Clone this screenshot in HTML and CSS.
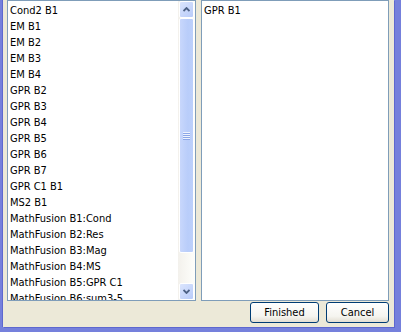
FILE: index.html
```html
<!DOCTYPE html>
<html lang="en">
<head>
  <meta charset="UTF-8" />
  <title>Select items</title>
  <link rel="stylesheet" href="styles.css">
</head>
<body>
  <div class="window">
    <div class="client">
      <div class="panes">
        <div class="listbox source">
          <ul class="items">
            <li>Cond2 B1</li>
            <li>EM B1</li>
            <li>EM B2</li>
            <li>EM B3</li>
            <li>EM B4</li>
            <li>GPR B2</li>
            <li>GPR B3</li>
            <li>GPR B4</li>
            <li>GPR B5</li>
            <li>GPR B6</li>
            <li>GPR B7</li>
            <li>GPR C1 B1</li>
            <li>MS2 B1</li>
            <li>MathFusion B1:Cond</li>
            <li>MathFusion B2:Res</li>
            <li>MathFusion B3:Mag</li>
            <li>MathFusion B4:MS</li>
            <li>MathFusion B5:GPR C1</li>
            <li>MathFusion B6:sum3-5</li>
          </ul>
          <div class="scrollbar">
            <div class="sb-btn">
              <svg width="7" height="5" viewBox="0 0 7 5"><polyline points="0.5,4 3.5,1 6.5,4" fill="none" stroke="#4d6185" stroke-width="1.8"/></svg>
            </div>
            <div class="sb-track">
              <div class="sb-thumb"><span class="grip"></span></div>
            </div>
            <div class="sb-btn">
              <svg width="7" height="5" viewBox="0 0 7 5"><polyline points="0.5,1 3.5,4 6.5,1" fill="none" stroke="#4d6185" stroke-width="1.8"/></svg>
            </div>
          </div>
        </div>
        <div class="listbox target">
          <ul class="items">
            <li>GPR B1</li>
          </ul>
        </div>
      </div>
      <div class="actions">
        <button class="btn finished">Finished</button>
        <button class="btn cancel">Cancel</button>
      </div>
    </div>
  </div>
</body>
</html>
```

FILE: styles.css
```css
body { margin: 0; background: #ece9d8; font-family: "DejaVu Sans Condensed", "Liberation Sans", sans-serif; font-size: 11px; color: #000; }
.window { width: 401px; height: 332px; box-sizing: border-box; border-left: 3px solid #7580dc; border-right: 7px solid #7580dc; border-bottom: 5px solid #7580dc; }
.client { height: 100%; box-sizing: border-box; padding: 0 5px 4px 4px; display: flex; flex-direction: column; box-shadow: 1px 1px 0 #5e68cf, -1px 0 0 #5e68cf; }
.panes { display: flex; gap: 5px; height: 301px; }
.listbox { box-sizing: border-box; height: 100%; border: 1px solid #7f9db9; background: #fff; display: flex; overflow: hidden; }
.source { width: 189px; }
.target { width: 188px; }
.items { list-style: none; margin: 0; padding: 2px 0 0 2px; flex: 1; overflow: hidden; }
.items li { height: 16px; line-height: 16px; white-space: nowrap; }

.scrollbar { width: 17px; display: flex; flex-direction: column; background: linear-gradient(to right, #f3f1ec, #fefefb); }
.sb-btn { height: 17px; box-sizing: border-box; margin: 0 1px; border: 1px solid #fff; border-radius: 2px; background: linear-gradient(135deg, #dbe5fd, #b8cbf9); display: flex; align-items: center; justify-content: center; }
.sb-track { flex: 1; }
.sb-thumb { height: 235px; box-sizing: border-box; margin: 0 1px; border: 1px solid #fff; border-radius: 2px; background: linear-gradient(to right, #c8d7fc, #b9cdfa 60%, #bcd0fb); display: flex; align-items: center; justify-content: center; }
.grip { width: 7px; height: 8px; background: repeating-linear-gradient(#eef3fe 0 1px, #8ca7e8 1px 2px); }

.actions { display: flex; justify-content: flex-end; gap: 7px; margin-top: 1px; }
.btn { height: 21px; box-sizing: border-box; padding: 0; border: 1px solid #003c74; border-radius: 3px; background: linear-gradient(#ffffff, #f5f4ef 70%, #e3ded2); font: inherit; color: #000; }
.finished { width: 69px; }
.cancel { width: 63px; }
```
